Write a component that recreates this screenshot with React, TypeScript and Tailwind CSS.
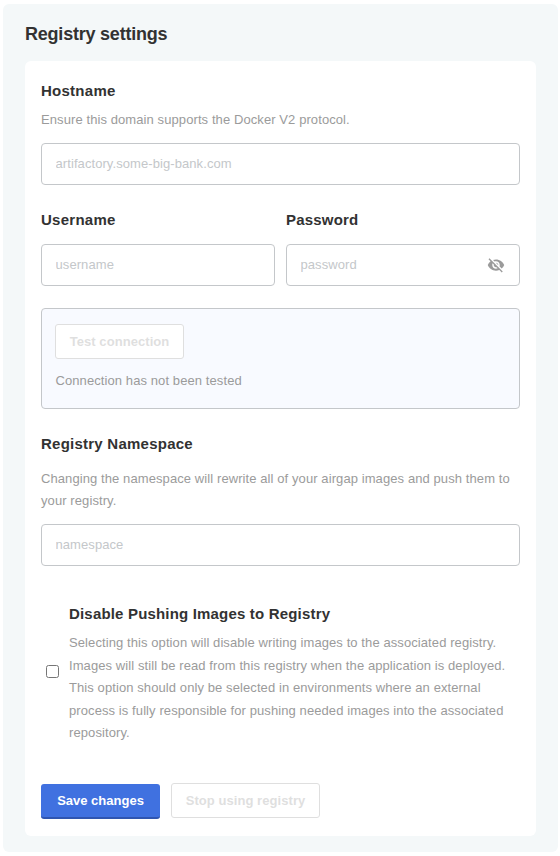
import { MdVisibilityOff } from "react-icons/md";

const label = "block text-[15px] leading-[18px] font-bold text-[#323232]";
const help = "text-[13px] leading-[22.4px] tracking-[0.09px] text-[#9b9b9b]";
const field =
  "block h-[42px] w-full rounded border border-[#c4c7ca] bg-white px-[13.5px] pb-[2px] text-[13px] tracking-[0.08px] text-[#323232] placeholder:text-[#c4c7ca] outline-none";
const ghost =
  "h-[35px] rounded-[3px] border border-[#dfdfdf] bg-white text-[13px] font-bold tracking-[0.06px] text-[#dfdfdf]";

export default function App() {
  return (
    <div className="h-[856px] w-[560px] bg-white pt-1 pl-[3px] font-['Liberation_Sans',Arial,sans-serif]">
      <main className="h-[848px] w-[555px] rounded-md bg-[#f4f8f9] px-[22px] pt-[19px]">
        <h1 className="h-[38px] text-[18px] leading-[22px] font-bold tracking-[-0.22px] text-[#323232]">Registry settings</h1>
        <form className="h-[775px] w-[511px] rounded-md bg-white px-4 pt-[21px]">
          <label htmlFor="hostname" className={`${label} tracking-[0.26px]`}>Hostname</label>
          <p className={`${help} mt-[9px]`}>Ensure this domain supports the Docker V2 protocol.</p>
          <input id="hostname" className={`${field} mt-[11.6px]`} placeholder="artifactory.some-big-bank.com" />

          <div className="mt-[26px] flex gap-[11px]">
            <div className="w-[234px]">
              <label htmlFor="username" className={`${label} tracking-[0.26px]`}>Username</label>
              <input id="username" className={`${field} mt-[15px]`} placeholder="username" />
            </div>
            <div className="w-[234px]">
              <label htmlFor="password" className={`${label} tracking-[0.2px]`}>Password</label>
              <div className="relative mt-[15px]">
                <input id="password" type="password" className={field} placeholder="password" />
                <MdVisibilityOff className="absolute top-[11.5px] right-[15px] text-[#9b9b9b]" size={18} />
              </div>
            </div>
          </div>

          <section className="mt-[22px] h-[101px] rounded border border-[#c4c7ca] bg-[#f8faff] px-[13px] pt-[15px]">
            <button type="button" className={`${ghost} w-[129px]`}>Test connection</button>
            <p className={`${help} mt-[11px] pl-[0.5px]`}>Connection has not been tested</p>
          </section>

          <label htmlFor="namespace" className={`${label} mt-[26px] tracking-[0.24px]`}>Registry Namespace</label>
          <p className={`${help} mt-[15px]`}>
            Changing the namespace will rewrite all of your airgap images and push them to<br />your registry.
          </p>
          <input id="namespace" className={`${field} mt-[11.2px]`} placeholder="namespace" />

          <div className="mt-[39px] flex items-center pl-[5px]">
            <input
              id="disable"
              type="checkbox"
              className="mr-[10px] mb-[6px] h-[13px] w-[13px] shrink-0 appearance-none rounded-[2.5px] border border-[#767676] bg-white"
            />
            <div>
              <label htmlFor="disable" className={`${label} tracking-[0.18px]`}>Disable Pushing Images to Registry</label>
              <p className={`${help} mt-[9.35px]`}>
                Selecting this option will disable writing images to the associated registry.<br />
                Images will still be read from this registry when the application is deployed.<br />
                This option should only be selected in environments where an external<br />
                process is fully responsible for pushing needed images into the associated<br />
                repository.
              </p>
            </div>
          </div>

          <div className="mt-[38.65px] flex gap-[11px]">
            <button
              type="button"
              className="mt-px h-[35px] w-[119px] rounded-[3px] border-b-2 border-[#2f55b0] bg-[#4071e0] text-[13px] font-bold text-white"
            >
              Save changes
            </button>
            <button type="button" className={`${ghost} w-[149px]`}>Stop using registry</button>
          </div>
        </form>
      </main>
    </div>
  );
}
